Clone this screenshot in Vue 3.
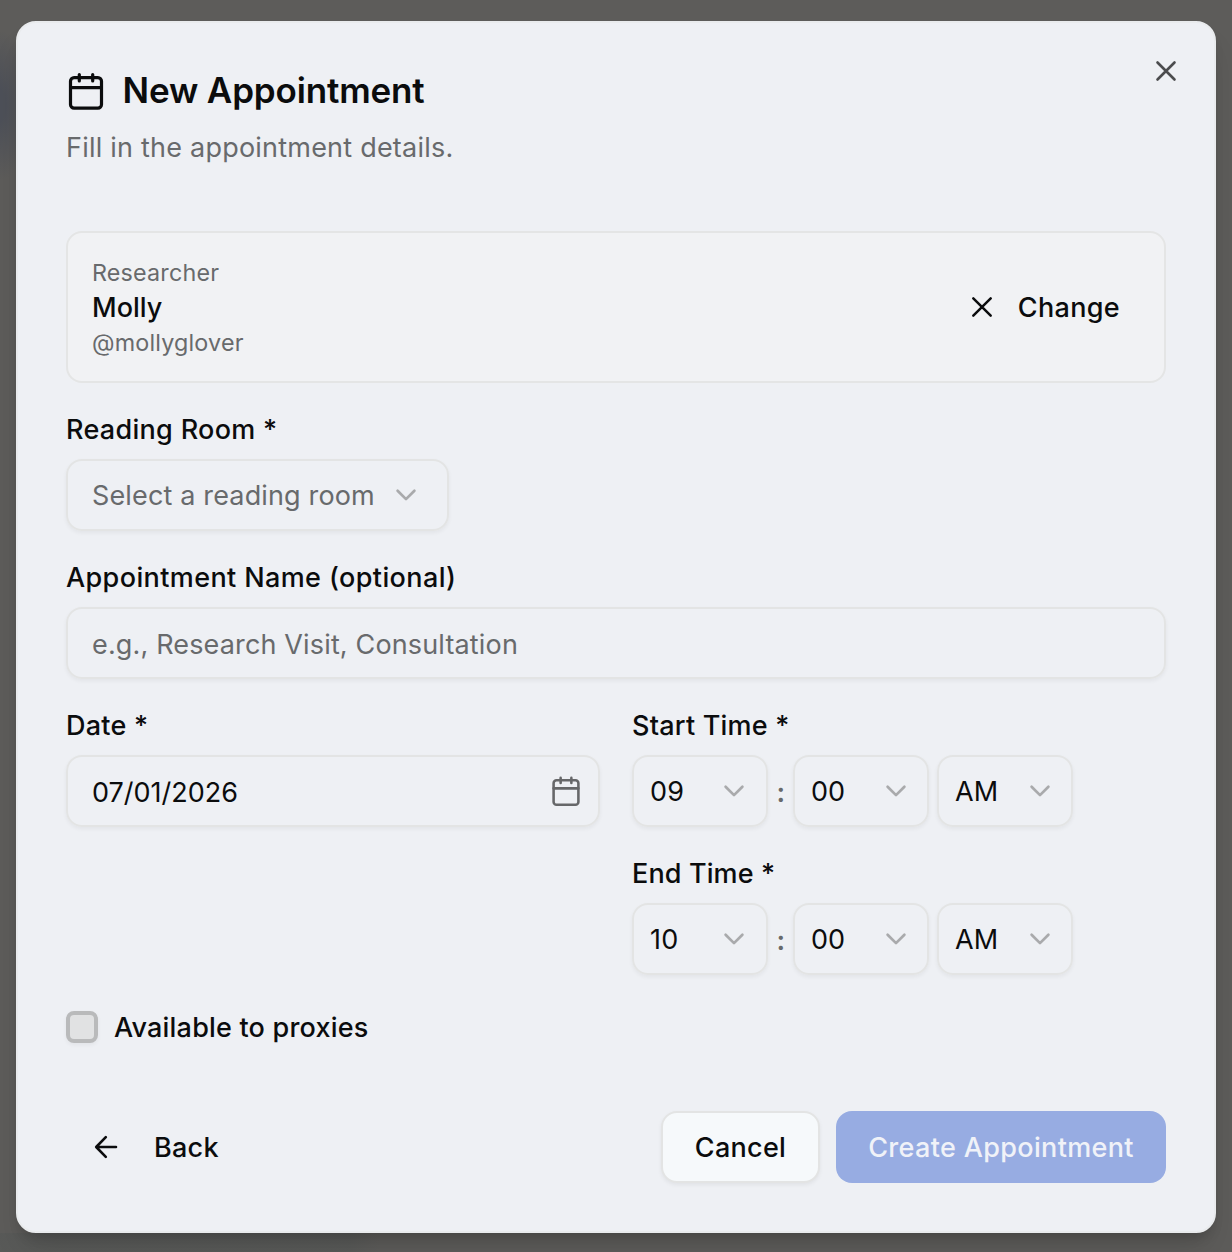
<script setup>
import { ref } from 'vue'

const times = ref([
  { label: 'Start Time *', hour: '09', minute: '00', period: 'AM', key: 'start' },
  { label: 'End Time *', hour: '10', minute: '00', period: 'AM', key: 'end' },
])
</script>

<template>
  <div class="backdrop">
    <section class="dialog" role="dialog" aria-label="New Appointment">
      <button class="close" aria-label="Close">
        <svg class="icon" viewBox="0 0 32 32"><path d="M7.5 7.5l17 17M24.5 7.5l-17 17" stroke-width="2.6" /></svg>
      </button>

      <header class="header">
        <h2 class="title">
          <svg class="icon large" viewBox="0 0 40 40">
            <rect x="4.5" y="6.6" width="31" height="30.6" rx="3.6" stroke-width="3.2" />
            <path d="M4.5 16.7h31M13.3 3.6v6.4M26.7 3.6v6.4" stroke-width="3.2" />
          </svg>
          <span class="t-title">New Appointment</span>
        </h2>
        <p class="subtitle"><span class="t-sub">Fill in the appointment details.</span></p>
      </header>

      <div class="card">
        <div class="person">
          <div class="small first"><span class="t-res">Researcher</span></div>
          <div class="name"><span class="t-molly">Molly</span></div>
          <div class="small"><span class="t-handle">@mollyglover</span></div>
        </div>
        <button class="change">
          <svg class="icon" viewBox="0 0 32 32"><path d="M7.3 7.3l17.4 17.4M24.7 7.3L7.3 24.7" stroke-width="2.5" /></svg>
          <span class="t-change">Change</span>
        </button>
      </div>

      <div class="field">
        <label class="label"><span class="t-room">Reading Room *</span></label>
        <div class="control room">
          <span class="placeholder t-select">Select a reading room</span>
          <svg class="icon chevron" viewBox="0 0 32 32"><path d="M7.6 11.7l8.4 8.4 8.4-8.4" /></svg>
        </div>
      </div>

      <div class="field">
        <label class="label"><span class="t-name">Appointment Name (optional)</span></label>
        <div class="control input"><span class="placeholder value t-eg">e.g., Research Visit, Consultation</span></div>
      </div>

      <div class="grid">
        <div class="field">
          <label class="label"><span class="t-date">Date *</span></label>
          <div class="control input">
            <span class="value">07/01/2026</span>
            <svg class="icon calendar" viewBox="0 0 40 40">
              <rect x="4.5" y="6.6" width="31" height="30.6" rx="3.6" stroke-width="3.2" />
              <path d="M4.5 16.7h31M13.3 3.6v6.4M26.7 3.6v6.4" stroke-width="3.2" />
            </svg>
          </div>
        </div>
        <div class="times">
          <div v-for="t in times" :key="t.key" class="field">
            <label class="label"><span :class="'t-' + t.key">{{ t.label }}</span></label>
            <div class="time-row">
              <div class="control time">
                <span class="t-hour">{{ t.hour }}</span>
                <svg class="icon chevron" viewBox="0 0 32 32"><path d="M7.6 11.7l8.4 8.4 8.4-8.4" /></svg>
              </div>
              <span class="colon">:</span>
              <div class="control time">
                <span>{{ t.minute }}</span>
                <svg class="icon chevron" viewBox="0 0 32 32"><path d="M7.6 11.7l8.4 8.4 8.4-8.4" /></svg>
              </div>
              <div class="control time">
                <span>{{ t.period }}</span>
                <svg class="icon chevron" viewBox="0 0 32 32"><path d="M7.6 11.7l8.4 8.4 8.4-8.4" /></svg>
              </div>
            </div>
          </div>
        </div>
      </div>

      <div class="check-row">
        <span class="checkbox" role="checkbox" aria-checked="false"></span>
        <span class="t-avail">Available to proxies</span>
      </div>

      <footer class="footer">
        <button class="back">
          <svg class="icon" viewBox="0 0 32 32"><path d="M26 16H6.4M15.8 6.2L6.2 16l9.6 9.8" stroke-width="2.6" /></svg>
          <span class="t-back">Back</span>
        </button>
        <div class="actions">
          <button class="btn cancel"><span class="t-cancel">Cancel</span></button>
          <button class="btn create"><span class="t-create">Create Appointment</span></button>
        </div>
      </footer>
    </section>
  </div>
</template>

<style>
body {
  margin: 0;
  background: #5c5b59;
}
</style>

<style scoped>
.backdrop {
  box-sizing: border-box;
  height: 1252px;
  padding: 21px 16px 19px;
  overflow: hidden;
  background:
    radial-gradient(ellipse 30px 75px at 0 105px, #4d5058 20%, transparent),
    linear-gradient(90deg, #52565566 0 350px, transparent 380px) bottom / 100% 19px no-repeat,
    #5d5c5a;
  font-family: Inter, "Liberation Sans", sans-serif;
  font-size: 27px;
  color: #0b0c0d;
}
.dialog {
  position: relative;
  box-sizing: border-box;
  height: 1212px;
  padding: 48px;
  border: 2px solid #e9ebed;
  border-radius: 20px;
  background: #eef0f4;
  box-shadow: 0 20px 30px -6px rgba(0, 0, 0, 0.12), 0 8px 12px -4px rgba(0, 0, 0, 0.16);
}
button {
  padding: 0;
  border: 0;
  background: none;
  font: inherit;
  font-weight: 500;
  color: inherit;
}
.icon {
  display: block;
  flex: none;
  width: 32px;
  height: 32px;
  fill: none;
  stroke: currentColor;
  stroke-width: 2.7;
  stroke-linecap: round;
  stroke-linejoin: round;
}
.icon.large { width: 40px; height: 40px; }
.icon.chevron { color: #a9aaac; }
.icon.calendar { color: #666769; }
.close {
  position: absolute;
  top: 32px;
  right: 32px;
  color: #4b4c4e;
}
.title {
  display: flex;
  align-items: center;
  gap: 16.5px;
  height: 40px;
  margin: 0;
  font-size: 35px;
  font-weight: 600;
  line-height: 38px;
}
.title span { padding-bottom: 2px; }
.subtitle {
  margin: 17px 0 0;
  line-height: 40px;
  color: #686a6c;
}
.card {
  display: flex;
  justify-content: space-between;
  align-items: center;
  box-sizing: border-box;
  height: 152px;
  margin-top: 63px;
  padding: 24px;
  border: 2px solid #e4e5e5;
  border-radius: 16px;
  background: #f1f2f4;
}
.person { padding-top: 3px; }
.small { font-size: 23.3px; line-height: 32px; color: #686a6c; }
.name { font-weight: 500; line-height: 39px; }
.small.first { line-height: 30px; }
.change { display: flex; align-items: center; gap: 20px; margin-right: 20px; }
.field { margin-top: 32px; }
.label { display: block; margin-bottom: 15px; padding-top: 1px; font-weight: 500; line-height: 28px; }
.control {
  display: flex;
  align-items: center;
  justify-content: space-between;
  box-sizing: border-box;
  height: 72px;
  padding: 0 24px;
  border: 2px solid #e3e4e4;
  border-radius: 16px;
  box-shadow: 0 2px 4px rgba(0, 0, 0, 0.05);
}
.control.input { padding-right: 16px; }
.value { padding-top: 2px; }
.control.room { width: 383px; padding-right: 25px; }
.placeholder { color: #686a6c; }
.grid { display: grid; grid-template-columns: 1fr 1fr; gap: 32px; }
.grid > .field { align-self: start; }
.time-row { display: flex; align-items: center; gap: 8px; }
.control.time { width: 136px; padding: 0 16px; }
.control.time + .control.time .chevron,
.colon + .control.time .chevron { margin-right: -1px; }
.colon { width: 9px; padding-top: 2px; text-align: center; font-weight: 600; color: #686a6c; text-indent: 0.5px; }
.check-row { display: flex; align-items: center; gap: 16px; height: 40px; margin-top: 32px; font-weight: 500; }
.checkbox {
  box-sizing: border-box;
  width: 32px;
  height: 32px;
  border: 4px solid #b9babb;
  border-radius: 8px;
  background: #e1e2e3;
  box-shadow: 0 2px 4px rgba(0, 0, 0, 0.05);
}
.footer { display: flex; align-items: center; justify-content: space-between; height: 72px; margin-top: 64px; }
.back { display: flex; align-items: center; gap: 32px; margin-left: 24px; }
.actions { display: flex; gap: 16px; }
.btn { box-sizing: border-box; height: 72px; border-radius: 16px; }
.cancel {
  width: 159px;
  border: 2px solid #e3e4e4;
  background: #f6f9fb;
  box-shadow: 0 2px 4px rgba(0, 0, 0, 0.06);
}
.create { width: 330px; background: #97ace2; color: #f0f2f8; }
[class*="t-"] { white-space: nowrap; }
.t-title { letter-spacing: -0.15px; }
.t-sub { letter-spacing: 0.22px; }
.t-res, .t-handle { letter-spacing: 0.19px; }
.t-change { letter-spacing: 0.33px; }
.t-room { letter-spacing: 0.3px; }
.t-select, .t-eg { letter-spacing: 0.15px; }
.t-name { letter-spacing: 0.39px; }
.t-date, .t-start { letter-spacing: 0.22px; }
.t-end { letter-spacing: 0.12px; }
.t-hour { letter-spacing: 0.3px; }
.t-avail { letter-spacing: 0.2px; }
.t-back, .t-cancel { letter-spacing: 0.28px; }
.t-create { letter-spacing: 0.34px; }
</style>
